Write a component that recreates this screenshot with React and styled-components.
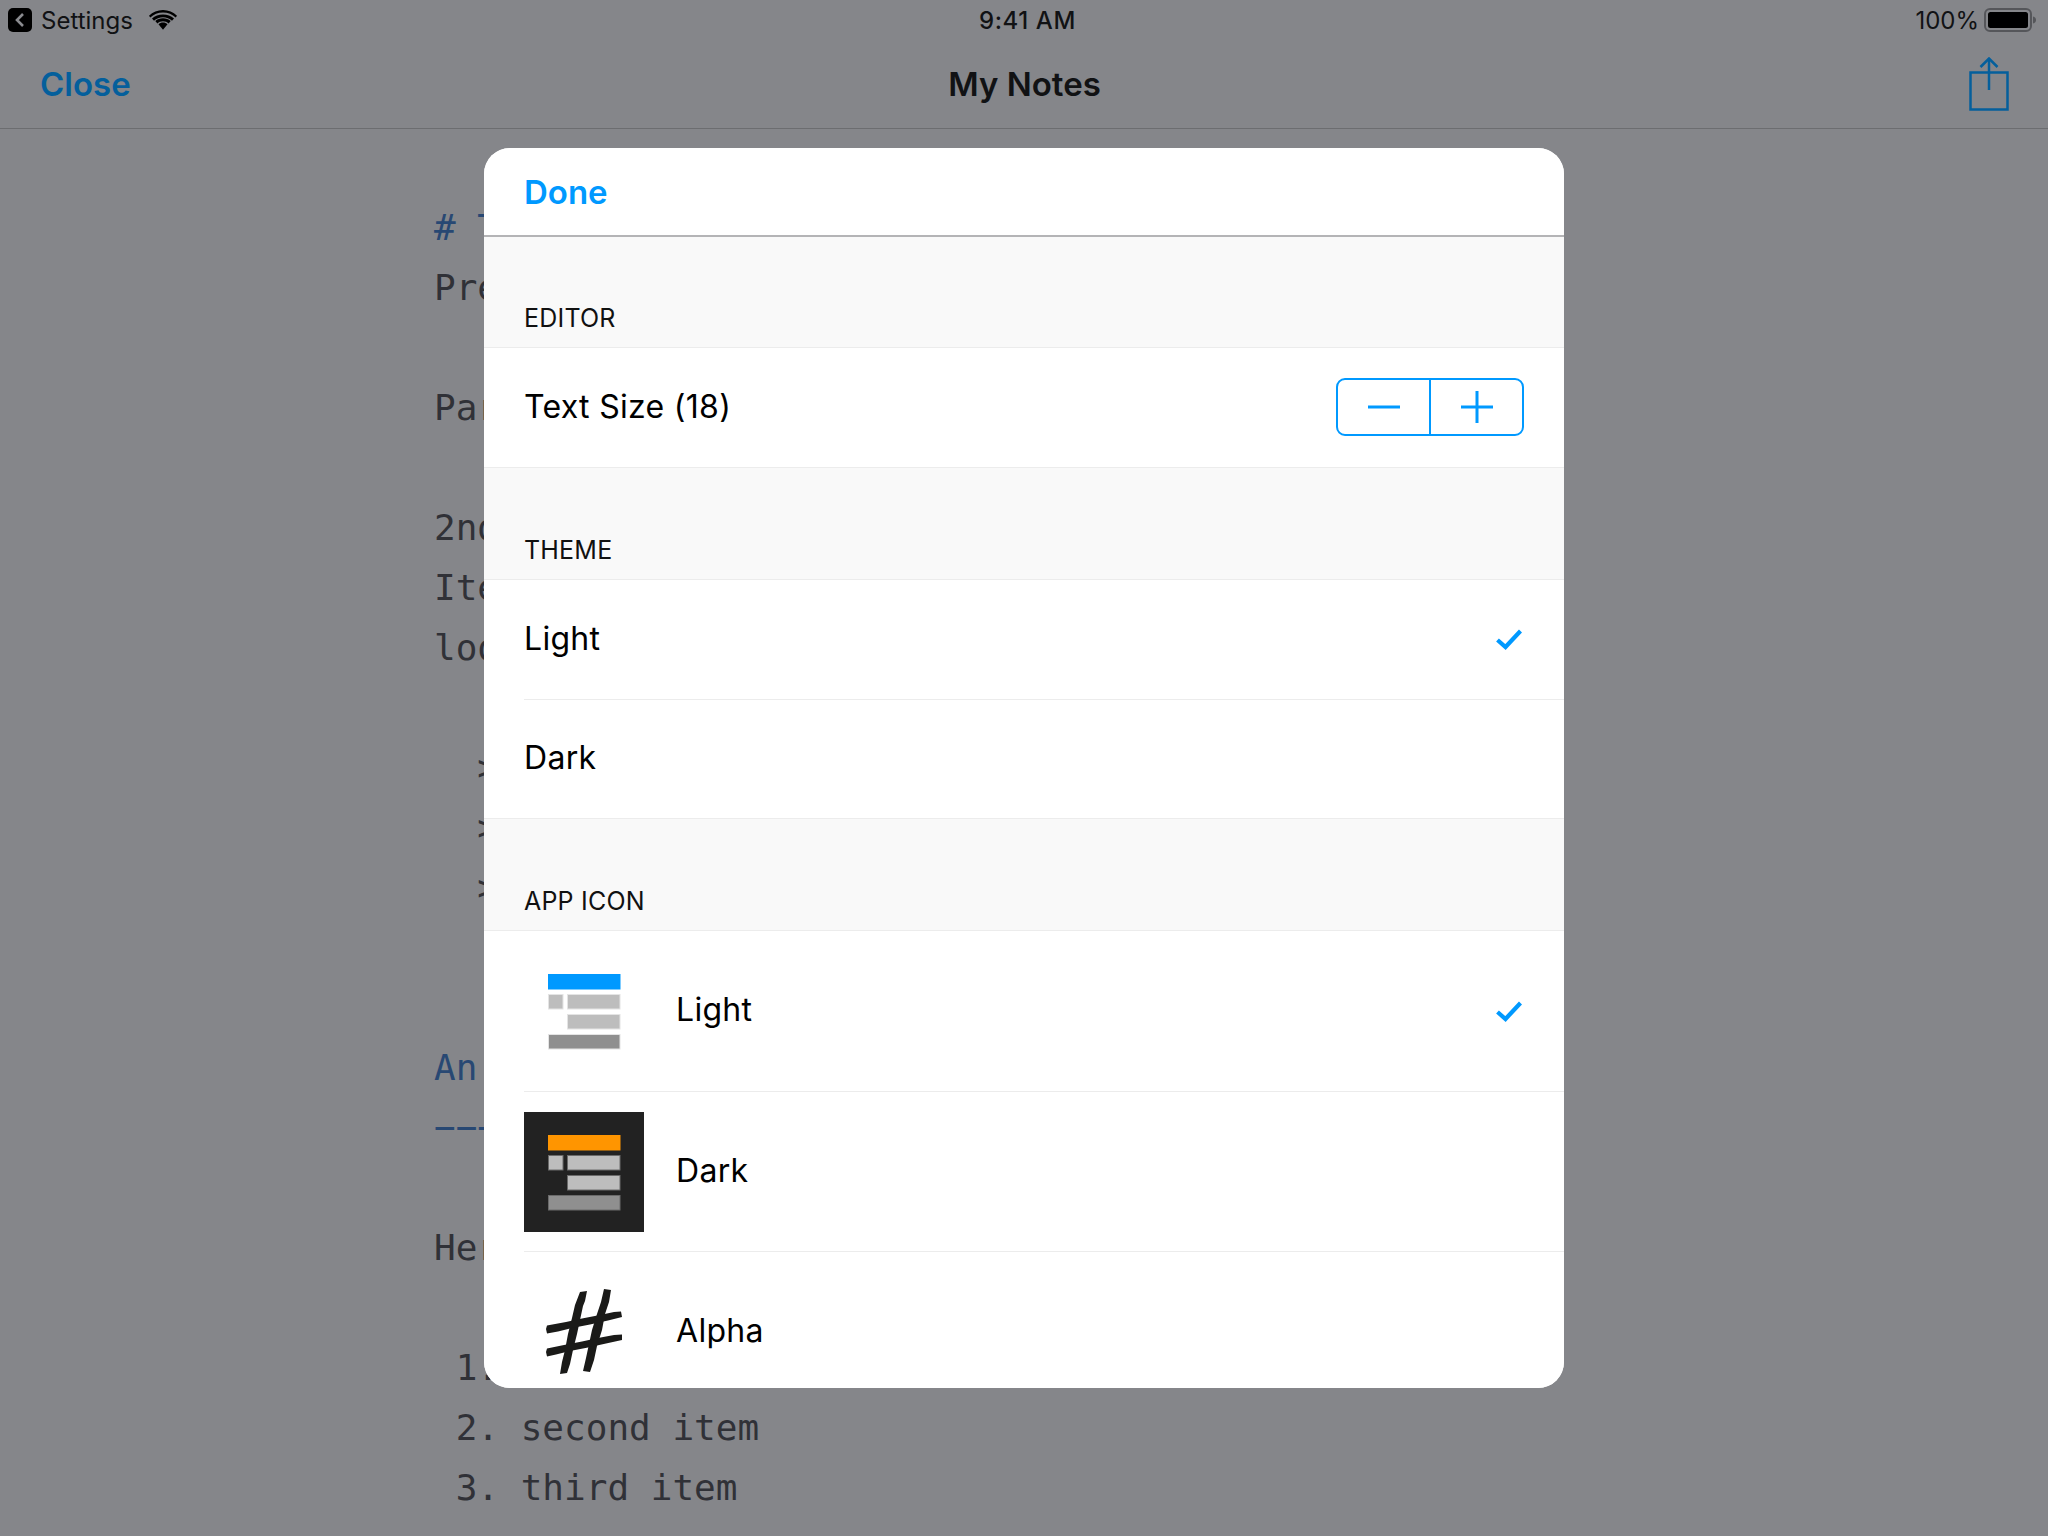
import React from 'react'
import styled, { createGlobalStyle } from 'styled-components'

const BLUE = '#0099ff'
const DIM_BLUE = '#045f9c'

const Global = createGlobalStyle`
html, body {
    margin: 0;
    padding: 0;
    background: #85868a;
}
* {
    box-sizing: border-box;
}
`

const Page = styled.div`
position: relative;
width: 2048px;
height: 1536px;
overflow: hidden;
background: #85868a;
font-family: Inter, "Noto Sans", sans-serif;
color: #000;
`

const StatusBar = styled.div`
display: grid;
grid-template-columns: 1fr auto 1fr;
align-items: center;
height: 40px;
padding: 0 11px 0 8px;
font-size: 24px;
color: #111214;
`

const StatusLeft = styled.div`
display: flex;
align-items: center;
`

const BackBadge = styled.div`
display: flex;
align-items: center;
justify-content: center;
width: 24px;
height: 24px;
border-radius: 5px;
background: #000;
margin-right: 9px;
`

const StatusLabel = styled.span`
margin-right: 16px;
`

const Clock = styled.span`
font-weight: 500;
letter-spacing: 0.6px;
transform: translateX(5px);
`

const StatusRight = styled.div`
display: flex;
align-items: center;
justify-content: flex-end;
gap: 5px;
`

const NavBar = styled.div`
display: grid;
grid-template-columns: 1fr auto 1fr;
align-items: center;
height: 89px;
padding: 0 39px 0 40px;
border-bottom: 1px solid #6c6d70;
`

const CloseLink = styled.span`
font-size: 33px;
font-weight: 600;
color: ${DIM_BLUE};
`

const NavTitle = styled.span`
font-size: 33px;
font-weight: 600;
color: #111214;
`

const NavAction = styled.div`
display: flex;
justify-content: flex-end;
`

const Editor = styled.div`
padding: 69px 0 0 434px;
font-family: "DejaVu Sans Mono", "Liberation Mono", monospace;
font-size: 36px;
line-height: 60px;
`

const CodeLine = styled.div`
height: 60px;
white-space: pre;
color: ${({ $heading }) => ($heading ? '#284873' : '#303137')};
`

const Sheet = styled.div`
position: absolute;
top: 148px;
left: 484px;
display: flex;
flex-direction: column;
width: 1080px;
height: 1240px;
border-radius: 26px;
overflow: hidden;
background: #f9f9f9;
`

const SheetHeader = styled.div`
display: flex;
align-items: center;
flex: none;
height: 89px;
padding-left: 40px;
background: #fff;
border-bottom: 2px solid #b4b4b6;
`

const DoneButton = styled.span`
font-size: 33px;
font-weight: 600;
color: ${BLUE};
`

const SectionLabel = styled.div`
display: flex;
align-items: flex-end;
flex: none;
height: ${({ $height }) => $height}px;
padding: 0 0 14px 40px;
font-size: 25px;
line-height: 30px;
letter-spacing: 0.2px;
color: #111;
`

const Group = styled.div`
flex: none;
background: #fff;
border-top: 1px solid #ececec;
border-bottom: ${({ $open }) => ($open ? 'none' : '1px solid #ececec')};
`

const Row = styled.div`
display: flex;
align-items: center;
justify-content: space-between;
height: ${({ $tall }) => ($tall ? 160 : 119)}px;
margin-left: 40px;
padding-right: 40px;
border-top: ${({ $divided }) => ($divided ? '1px solid #ececec' : 'none')};
`

const RowLead = styled.div`
display: flex;
align-items: center;
gap: 32px;
font-size: 32px;
letter-spacing: 0.3px;
`

const RowText = styled.span`
padding-bottom: 3px;
`

const Stepper = styled.div`
display: flex;
width: 188px;
height: 58px;
margin-bottom: 2px;
border: 2px solid ${BLUE};
border-radius: 9px;
`

const StepButton = styled.div`
flex: 1;
display: flex;
align-items: center;
justify-content: center;
& + & {
    border-left: 2px solid ${BLUE};
}
`

const CheckMark = styled.svg`
margin-right: 2px;
`

const IconTile = styled.div`
display: block;
width: 120px;
height: 120px;
line-height: 0;
background: ${({ $dark }) => ($dark ? '#222222' : '#fff')};
`

const lines = [
    { text: '# T', heading: true },
    { text: 'Pre' },
    { text: '' },
    { text: 'Par' },
    { text: '' },
    { text: '2nd' },
    { text: 'Ite' },
    { text: 'loo' },
    { text: '' },
    { text: '  >' },
    { text: '  >' },
    { text: '  >' },
    { text: '' },
    { text: '' },
    { text: 'An', heading: true },
    { text: '−−−', heading: true },
    { text: '' },
    { text: 'Her' },
    { text: '' },
    { text: ' 1.' },
    { text: ' 2. second item' },
    { text: ' 3. third item' },
]

const Chevron = () => (
    <svg width="12" height="16" viewBox="0 0 12 16">
        <path d="M9 2 L3 8 L9 14" fill="none" stroke="#8a8b8f" strokeWidth="2.6" />
    </svg>
)

const Wifi = () => (
    <svg width="28" height="20" viewBox="0 0 28 20">
        <path d="M14 2.400c-4.900 0-9.400 1.900-12.700 5l-1.300-1.700C3.700 2.200 8.600 0 14 0s10.300 2.200 14 5.700l-1.300 1.700c-3.300-3.100-7.800-5-12.700-5z" fill="#000" />
        <path d="M14 7.300c-3.500 0-6.600 1.300-9 3.500L3 8.500C5.900 5.900 9.800 4.400 14 4.400s8.100 1.500 11 4.100l-2 2.300c-2.400-2.200-5.500-3.500-9-3.500z" fill="#000" />
        <path d="M14 11.300c-2.200 0-4.100.8-5.600 2.100L6.300 11C8.300 9.200 11 8.200 14 8.200s5.700 1 7.700 2.800l-2.100 2.400c-1.500-1.300-3.400-2.100-5.600-2.100z" fill="#000" />
        <path d="M14 12.500c1.700 0 3.300.6 4.500 1.700L14 19.700l-4.500-5.500c1.200-1.100 2.800-1.700 4.500-1.700z" fill="#000" />
    </svg>
)

const Battery = () => (
    <svg width="53" height="24" viewBox="0 0 53 24">
        <rect x="1" y="1" width="46" height="22" rx="5" fill="none" stroke="#55565a" strokeWidth="2" />
        <rect x="4" y="4" width="40" height="16" rx="2.5" fill="#000" />
        <path d="M49 8.500c2 .3 3 1.700 3 3.500s-1 3.200-3 3.500z" fill="#55565a" />
    </svg>
)

const ShareIcon = () => (
    <svg width="40" height="54" viewBox="0 0 40 54">
        <path d="M20 1.500 V33" fill="none" stroke={DIM_BLUE} strokeWidth="2.5" />
        <path d="M11.500 10 L20 1.500 L28.500 10" fill="none" stroke={DIM_BLUE} strokeWidth="2.5" />
        <path d="M1.500 15.500 H38.500 V52.500 H1.500 Z" fill="none" stroke={DIM_BLUE} strokeWidth="2.5" />
    </svg>
)

const Minus = () => (
    <svg width="32" height="4" viewBox="0 0 32 4">
        <rect width="32" height="3" y="0.5" fill={BLUE} />
    </svg>
)

const Plus = () => (
    <svg width="32" height="32" viewBox="0 0 32 32">
        <rect x="0" y="14.5" width="32" height="3" fill={BLUE} />
        <rect x="14.5" y="0" width="3" height="32" fill={BLUE} />
    </svg>
)

const Check = () => (
    <CheckMark width="26" height="21" viewBox="0 0 26 21">
        <path d="M1.500 11 L9.500 18 L24.500 2" fill="none" stroke={BLUE} strokeWidth="4.2" />
    </CheckMark>
)

const BarsIcon = ({ accent, edge }) => (
    <svg width="120" height="120" viewBox="0 0 120 120">
        <g stroke={edge} strokeWidth="1">
            <rect x="24.5" y="23.5" width="71.5" height="14.5" fill={accent} stroke={accent} />
            <rect x="24.5" y="43.5" width="14.5" height="14.5" fill="#bdbdbd" />
            <rect x="43.5" y="43.5" width="52.5" height="14.5" fill="#bdbdbd" />
            <rect x="43.5" y="63.5" width="52.5" height="14.5" fill="#bdbdbd" />
            <rect x="24.5" y="83.5" width="71.5" height="14.5" fill="#8f8f8f" />
        </g>
    </svg>
)

// brush-drawn hash logo: four rough strokes
const HashIcon = () => (
    <svg width="120" height="120" viewBox="0 0 120 120">
        <g fill="#1a1a18">
            <path d="M56 20 L63 19 L61 29 L59 34 L56 48 L53 62 L49 78 L46 92 L43 101 L36 102 L38 90 L41 78 L44 62 L48 46 L51 33 Z" />
            <path d="M80 17 L87 18 L85 30 L81 42 L78 58 L73 74 L70 88 L66 100 L59 99 L62 86 L65 72 L68 58 L73 42 L77 30 Z" />
            <path d="M23 53.500 L42 50 L58 46.500 L76 43 L90 40 L97 39.500 L98 45 L84 48.500 L66 52.500 L48 56 L34 59.500 L23 61.500 L22 57 Z" />
            <path d="M23 76.500 L40 73 L58 69.500 L74 66 L90 63 L98 62.500 L98 68 L82 71.500 L64 75.500 L46 79 L32 82.500 L23 84.500 L22 80 Z" />
        </g>
    </svg>
)

const App = () => {
    return (
        <Page>
            <Global />
            <StatusBar>
                <StatusLeft>
                    <BackBadge><Chevron /></BackBadge>
                    <StatusLabel>Settings</StatusLabel>
                    <Wifi />
                </StatusLeft>
                <Clock>9:41 AM</Clock>
                <StatusRight>
                    <span>100%</span>
                    <Battery />
                </StatusRight>
            </StatusBar>
            <NavBar>
                <CloseLink>Close</CloseLink>
                <NavTitle>My Notes</NavTitle>
                <NavAction><ShareIcon /></NavAction>
            </NavBar>
            <Editor>
                {lines.map((line, index) => (
                    <CodeLine key={index} $heading={line.heading}>{line.text}</CodeLine>
                ))}
            </Editor>
            <Sheet>
                <SheetHeader>
                    <DoneButton>Done</DoneButton>
                </SheetHeader>
                <SectionLabel $height={110}>EDITOR</SectionLabel>
                <Group>
                    <Row>
                        <RowLead><RowText>Text Size (18)</RowText></RowLead>
                        <Stepper>
                            <StepButton><Minus /></StepButton>
                            <StepButton><Plus /></StepButton>
                        </Stepper>
                    </Row>
                </Group>
                <SectionLabel $height={111}>THEME</SectionLabel>
                <Group>
                    <Row>
                        <RowLead><RowText>Light</RowText></RowLead>
                        <Check />
                    </Row>
                    <Row $divided>
                        <RowLead><RowText>Dark</RowText></RowLead>
                    </Row>
                </Group>
                <SectionLabel $height={111}>APP ICON</SectionLabel>
                <Group $open>
                    <Row $tall>
                        <RowLead>
                            <IconTile><BarsIcon accent={BLUE} edge="#e4e4e4" /></IconTile>
                            <RowText>Light</RowText>
                        </RowLead>
                        <Check />
                    </Row>
                    <Row $tall $divided>
                        <RowLead>
                            <IconTile $dark><BarsIcon accent="#ff9500" edge="#6a6a6a" /></IconTile>
                            <RowText>Dark</RowText>
                        </RowLead>
                    </Row>
                    <Row $tall $divided>
                        <RowLead>
                            <IconTile><HashIcon /></IconTile>
                            <RowText>Alpha</RowText>
                        </RowLead>
                    </Row>
                </Group>
            </Sheet>
        </Page>
    )
}

export default App
